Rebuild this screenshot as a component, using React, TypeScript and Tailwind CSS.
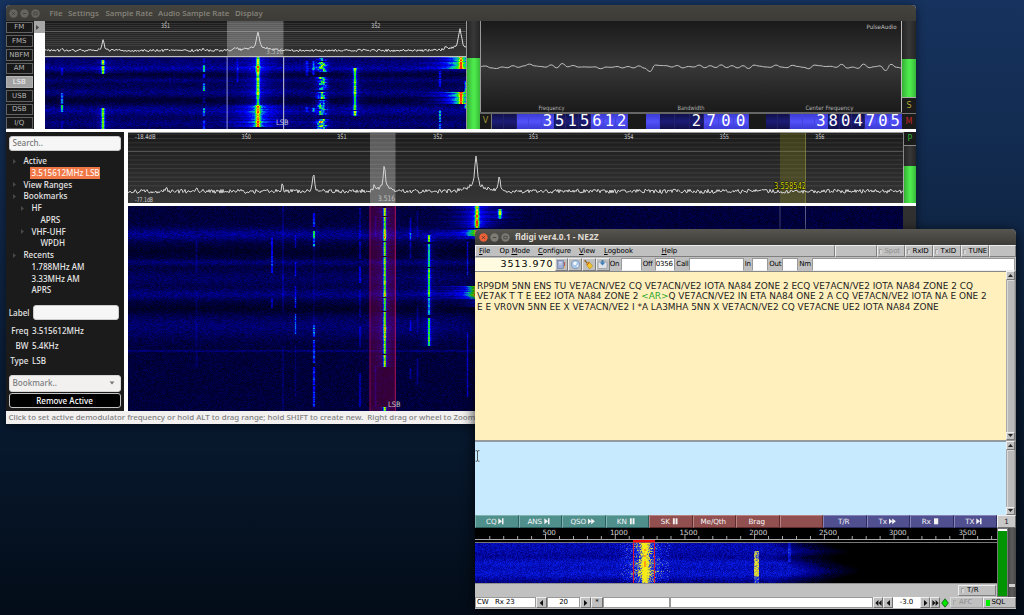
import React from "react";

/* ---------- helpers ---------- */

function hash(x: number, y: number, s = 0): number {
  let h = (x * 374761393 + y * 668265263 + s * 982451653) | 0;
  h = Math.imul(h ^ (h >>> 13), 1274126177);
  h ^= h >>> 16;
  return (h >>> 0) / 4294967296;
}

type Stop = [number, number, number, number];

function palette(stops: Stop[], n: number): string[] {
  const out: string[] = [];
  for (let i = 0; i < n; i++) {
    const t = i / (n - 1);
    let k = 0;
    while (k < stops.length - 2 && t > stops[k + 1][0]) k++;
    const a = stops[k];
    const b = stops[k + 1];
    const f = Math.min(1, Math.max(0, (t - a[0]) / (b[0] - a[0])));
    const c = [1, 2, 3].map((j) => Math.round(a[j] + (b[j] - a[j]) * f));
    out.push(`rgb(${c.join(",")})`);
  }
  return out;
}

const sdrColors = palette(
  [
    [0, 0, 0, 0],
    [0.32, 0, 0, 255],
    [0.5, 0, 190, 200],
    [0.62, 20, 235, 20],
    [0.82, 235, 245, 0],
    [1, 255, 50, 0],
  ],
  64
);

const digiColors = palette(
  [
    [0, 0, 0, 0],
    [0.15, 0, 0, 62],
    [0.3, 0, 0, 136],
    [0.5, 8, 30, 235],
    [0.62, 80, 100, 180],
    [0.7, 170, 170, 100],
    [0.82, 235, 225, 40],
    [0.94, 250, 240, 20],
    [1, 255, 160, 20],
  ],
  56
);

function rasterize(
  w: number,
  h: number,
  levels: number,
  value: (x: number, y: number) => number
): string[] {
  const parts: string[][] = Array.from({ length: levels }, () => []);
  for (let y = 0; y < h; y++) {
    let start = 0;
    let current = -1;
    for (let x = 0; x <= w; x++) {
      const level =
        x < w
          ? Math.max(0, Math.min(levels - 1, Math.round(value(x, y) * (levels - 1))))
          : -2;
      if (level !== current) {
        if (current > 0) parts[current].push(`M${start} ${y}h${x - start}v1h${start - x}z`);
        start = x;
        current = level;
      }
    }
  }
  return parts.map((p) => p.join(""));
}

interface Signal {
  x: number;
  w: number;
  glow?: number;
  glowAmp?: number;
  jitter?: number;
  segs: [number, number, number][];
}

function signalAt(signals: Signal[], x: number, y: number): number {
  let v = 0;
  for (const s of signals) {
    if (Math.abs(x - s.x) > 70) continue;
    for (const [a, b, amp] of s.segs) {
      if (y < a || y > b) continue;
      const row = s.glow ? 0.78 + 0.28 * hash(Math.round(s.x), y, 5) : 0.5 + 0.5 * hash(Math.round(s.x), y, 5);
      const dx = Math.abs(x - s.x - (s.jitter ? (hash(y, 3, 8) - 0.5) * s.jitter : 0));
      const grain = s.jitter ? 0.1 + 0.9 * hash(x >> 1, y >> 1, 11) : 1;
      v += amp * row * grain * Math.exp(-(dx * dx) / (s.w * s.w));
      if (s.glow) v += amp * row * (s.glowAmp ?? 0.25) * Math.exp(-dx / (s.glow * (0.6 + 0.7 * hash(y, 1, 2))));
    }
  }
  return v;
}

function bump(y: number, c: number, w: number): number {
  return Math.exp(-((y - c) * (y - c)) / (w * w));
}

/* ---------- zoomed waterfall ---------- */

const zoomSignals: Signal[] = [
  { x: 16.5, w: 1.2, segs: [[11, 18, 0.22], [36, 46, 0.5], [48, 54, 0.55], [64, 71, 0.12]] },
  { x: 57.5, w: 1.5, glow: 4, segs: [[3, 7, 0.56], [9, 16, 0.56], [51, 60, 0.52], [61, 71, 0.56]] },
  { x: 158.5, w: 1.2, segs: [[1, 5, 0.2], [8, 14, 0.5], [17, 20, 0.34], [26, 33, 0.55], [40, 45, 0.15], [51, 58, 0.42], [63, 71, 0.28]] },
  { x: 192, w: 1, segs: [[2, 24, 0.18]] },
  { x: 212.5, w: 1.7, glow: 11, glowAmp: 0.32, segs: [[0, 8, 0.54], [9, 16, 0.66], [17, 27, 0.54], [28, 37, 0.54], [38, 47, 0.5]] },
  { x: 212.5, w: 2.2, glow: 13, glowAmp: 0.75, segs: [[48, 69, 0.52]] },
  { x: 261.5, w: 1.4, segs: [[4, 18, 0.22], [50, 54, 0.24]] },
  { x: 268, w: 1.3, segs: [[4, 17, 0.36], [51, 54, 0.4]] },
  { x: 276.5, w: 4, jitter: 3, glow: 5, segs: [[1, 3, 0.4], [5, 14, 0.58], [20, 32, 0.54], [35, 41, 0.62], [43, 57, 0.5], [62, 71, 0.66]] },
  { x: 309.5, w: 1.5, glow: 4, segs: [[11, 24, 0.54], [25, 38, 0.54], [39, 52, 0.5], [54, 58, 0.56]] },
  { x: 394.5, w: 1.1, segs: [[14, 20, 0.36], [22, 29, 0.36], [53, 64, 0.5], [66, 71, 0.42]] },
  { x: 415.5, w: 1.6, glow: 12, glowAmp: 1.6, segs: [[0, 11, 0.38], [35, 46, 0.41]] },
  { x: 420, w: 1.2, segs: [[24, 34, 0.5], [46, 51, 0.45]] },
];

const zoomPaths = rasterize(421, 72, 64, (x, y) => {
  const band =
    0.075 + 0.085 * bump(y, 11, 3) + 0.04 * bump(y, 5, 5) + 0.045 * bump(y, 23, 2) + 0.05 * bump(y, 35, 4) +
    0.08 * bump(y, 53, 5) + 0.045 * bump(y, 66, 4) - 0.04 * bump(y, 43, 4) - 0.03 * bump(y, 17, 2);
  return band * (0.75 + 0.5 * hash(x >> 1, y)) + 0.05 * hash(x, y, 4) + signalAt(zoomSignals, x, y);
});

/* ---------- main waterfall ---------- */

const mainSignals: Signal[] = [
  { x: 68, w: 1, segs: [[34, 66, 0.09], [85, 140, 0.07], [145, 160, 0.08]] },
  { x: 143.5, w: 0.8, segs: [[32, 66, 0.4], [92, 102, 0.26]] },
  { x: 154.5, w: 0.8, segs: [[0, 105, 0.12], [140, 204, 0.09]] },
  { x: 167, w: 0.8, segs: [[29, 41, 0.18], [56, 69, 0.24], [80, 90, 0.24], [91, 101, 0.34], [108, 127, 0.36], [140, 190, 0.07]] },
  { x: 185.5, w: 1, segs: [[7, 20, 0.44], [25, 40, 0.58], [119, 130, 0.5], [134, 156, 0.42], [161, 178, 0.44], [180, 200, 0.44], [40, 118, 0.06]] },
  { x: 231.5, w: 0.9, segs: [[2, 32, 0.16], [35, 52, 0.22], [60, 76, 0.3], [84, 110, 0.14], [120, 140, 0.18], [167, 200, 0.22]] },
  { x: 247, w: 0.9, segs: [[10, 30, 0.12], [160, 200, 0.12]] },
  { x: 256.3, w: 1.4, glow: 5, segs: [[2, 9, 0.62], [11, 24, 0.58], [25, 34, 0.66], [36, 49, 0.6], [51, 60, 0.58], [61, 75, 0.56], [76, 90, 0.6], [92, 104, 0.56], [106, 116, 0.6], [117, 132, 0.62], [133, 147, 0.58], [149, 160, 0.62], [201, 205, 0.62]] },
  { x: 282, w: 1, segs: [[12, 26, 0.18], [27, 34, 0.32], [36, 52, 0.16], [114, 124, 0.2], [162, 172, 0.16]] },
  { x: 289, w: 1, segs: [[5, 30, 0.09], [100, 125, 0.08], [152, 178, 0.14]] },
  { x: 300.5, w: 1.2, glow: 4, segs: [[29, 35, 0.54], [38, 60, 0.46], [62, 72, 0.56], [73, 90, 0.48], [92, 108, 0.4], [112, 129, 0.46], [130, 139, 0.54]] },
  { x: 339, w: 0.8, segs: [[36, 68, 0.26], [126, 190, 0.26]] },
  { x: 348.5, w: 1.8, glow: 13, glowAmp: 0.55, segs: [[0, 4, 0.54], [5, 12, 0.6], [13, 21, 0.66], [24, 32, 0.44], [80, 92, 0.55]] },
  { x: 348, w: 8, glow: 18, glowAmp: 0.4, segs: [[23, 29, 0.26], [80, 90, 0.3], [91, 100, 0.12]] },
  { x: 371.5, w: 1.7, glow: 6, segs: [[3, 8, 0.58], [9, 12, 0.4]] },
];

const mainPaths = rasterize(775, 205, 64, (x, y) => {
  if (x > 350 && y > 30) return 0;
  const band =
    0.05 + 0.1 * bump(y, 28, 6) + 0.065 * bump(y, 56, 3) + 0.045 * bump(y, 72, 8) + 0.08 * bump(y, 88, 5) +
    0.06 * bump(y, 120, 12) + 0.08 * bump(y, 144.5, 1) - 0.03 * bump(y, 103, 5) - 0.02 * bump(y, 45, 5);
  return band * (0.75 + 0.5 * hash(x >> 1, y, 7)) + 0.05 * hash(x, y, 9) + signalAt(mainSignals, x, y);
});

/* ---------- fldigi waterfall ---------- */

const digiPaths = rasterize(522, 40, 56, (x, y) => {
  const reach = 335 + 30 * bump(y, 27, 8) + 20 * bump(y, 8, 4);
  const fade = Math.max(0, Math.min(1, 1 - (x - reach + 45) / 65));
  let v = (0.3 + 0.15 * hash(x, y, 21) + 0.05 * bump(y, 20, 4) + 0.05 * bump(y, 30, 4) - 0.09 * bump(y, 39, 4) - 0.04 * bump(y, 13, 4)) * fade;
  if (fade < 0.5 && fade > 0) v *= 0.4 + 0.9 * hash(x, y, 33);
  const d = Math.abs(x - 169.5);
  v += 0.3 * Math.exp(-(d * d) / 12) + (0.13 + 0.28 * hash(x, y, 2)) * Math.exp(-(d * d) / (90 + 90 * hash(y, 2, 6)));
  if (d < 25 && d > 5 && hash(x, y, 40) > 0.8) v += 0.14;
  v = d < 1.5 && hash(y >> 1, 4, 4) > 0.8 ? v + 0.2 : Math.min(v, 0.93);
  if (Math.abs(x - 281) < 2.2) {
    if (y > 7 && y < 33) v += 0.24 + 0.2 * hash(x, y, 3);
    else if (y >= 33) v += 0.12 + 0.2 * hash(x, y, 3);
  }
  if (Math.abs(x - 314) < 1.2 && y < 19) v += 0.17;
  return v;
});

function Heat({ paths, colors }: { paths: string[]; colors: string[] }) {
  return (
    <g shapeRendering="crispEdges">
      {paths.map((d, i) => (d ? <path key={i} d={d} fill={colors[i]} /> : null))}
    </g>
  );
}

/* ---------- spectrum traces ---------- */

function trace(w: number, base: number, noise: number, peaks: [number, number, number, number][], seed: number) {
  const pts: string[] = [];
  for (let x = 0; x <= w; x += 1) {
    let y = base + (hash(x, 1, seed) - 0.5) * noise;
    for (const [px, h, pw, skirt] of peaks) {
      const d = Math.abs(x - px);
      y -= h * (0.65 * Math.exp(-(d * d) / (pw * pw)) + 0.35 * Math.exp(-d / skirt));
    }
    pts.push(`${x},${y.toFixed(1)}`);
  }
  return pts.join(" ");
}

const zoomTrace = trace(421, 29.5, 2.4, [[17, 2, 1.5, 1], [58, 10, 1.5, 3], [158, 2.5, 1.5, 2], [190, 2, 3, 3], [213, 18, 2, 9], [415, 21, 2, 8], [401, 3, 2, 2]], 3);
const mainTrace = trace(775, 59.3, 4, [[38, 5, 1, 1], [68, 2.5, 2, 2], [154.5, 10, 1, 1], [185.5, 20, 1.2, 1.5], [246, 5, 1, 1], [256.3, 28, 1.3, 5], [348, 37, 1.5, 7], [371.3, 15, 1.2, 2]], 14);

const waveOffsets = [
  0, -0.5, 1.4, 2, 0.5, 1.2, -0.8, 0.8, -0.6, -2.4, -0.6, 0, 0.6, -1.6, 1.4, -3, 0.3, -1, 0.6, 0.4, 0.6, 0.4, 2.2, 0.6, 0.8, 0,
  1.4, 0, 1.4, -0.6, 1.6, 5, -1.4, -1, -0.8, 0.5, -1, 1.4, 0, 0.5, -1.4, 1.2, -0.8, 1, -1.6, 1, -0.8, 1.4, -0.8, 2, -1.4, -0.4,
  0.4, 0.8, -1.4, 0.6, 1.2, -1.2, 0, 0.8, 2.2, -1.4, -0.8, 0, -0.2, 0.8, -2.2, 1.6, 0.6, 1.8, -2.4, 1.2, 0.2, -0.6, 4, -2.2, 0.8, 1.6,
];

function wavePath() {
  const step = 422 / (waveOffsets.length - 1);
  let d = `M0 ${45.5 + waveOffsets[0]}`;
  for (let i = 1; i < waveOffsets.length; i++) {
    const x0 = (i - 1) * step;
    const x1 = i * step;
    const m = (x0 + x1) / 2;
    d += `C${m.toFixed(1)} ${45.5 + waveOffsets[i - 1]} ${m.toFixed(1)} ${45.5 + waveOffsets[i]} ${x1.toFixed(1)} ${45.5 + waveOffsets[i]}`;
  }
  return d;
}

function Label({ x, y, w, children, fill = "#d0d0d0", size = 6.5, shadow = false }: { x: number; y: number; w: number; children: string; fill?: string; size?: number; shadow?: boolean }) {
  return (
    <text
      x={x}
      y={y}
      textLength={w}
      lengthAdjust="spacingAndGlyphs"
      fontFamily="'DejaVu Sans', sans-serif"
      fontSize={size}
      fill={fill}
      stroke={shadow ? "#101010" : "none"}
      strokeWidth={shadow ? 1.2 : 0}
      paintOrder="stroke"
    >
      {children}
    </text>
  );
}

function ZoomView() {
  return (
    <svg width="421" height="108" className="block shrink-0">
      <defs>
        <linearGradient id="specBg" x1="0" y1="0" x2="0" y2="1">
          <stop offset="0" stopColor="#1b1b1b" />
          <stop offset="1" stopColor="#363636" />
        </linearGradient>
      </defs>
      <rect width="421" height="108" fill="#000" />
      <rect width="421" height="35" fill="url(#specBg)" />
      {[2, 4, 6, 8, 12, 14, 16, 18, 20, 22, 24].map((y) => (
        <rect key={y} y={y} width="421" height="1" fill="#fff" opacity="0.09" />
      ))}
      <rect y="10" width="421" height="1" fill="#fff" opacity="0.28" />
      <rect x="182" width="56.5" height="35" fill="#fff" opacity="0.28" />
      <polyline points={zoomTrace} fill="none" stroke="#d8d8d8" strokeWidth="1" />
      <rect x="120.5" width="1" height="2" fill="#aaa" />
      <rect x="330.5" width="1" height="2" fill="#aaa" />
      <Label x={116} y={6.8} w={9}>351</Label>
      <Label x={326} y={6.8} w={9.5}>352</Label>
      <Label x={221} y={32.5} w={17.5} size={7.5} fill="#b8b8b8">3.516</Label>
      <g transform="translate(0 36)">
        <Heat paths={zoomPaths} colors={sdrColors} />
        <rect x="181.5" width="1.3" height="72" fill="#8f92d8" opacity="0.75" />
        <rect x="238" width="1.2" height="72" fill="#c8c8dd" opacity="0.85" />
        <Label x={231} y={68} w={12.5} size={7.5} fill="#c8c8d8">LSB</Label>
      </g>
      <rect y="35" width="421" height="1.2" fill="#c0c0c0" />
    </svg>
  );
}

function MainSpectrum() {
  const marks: [number, string][] = [[118, "350"], [213.6, "351"], [309.5, "352"], [405, "353"], [500.5, "354"], [596, "355"], [691.5, "356"]];
  return (
    <svg width="775" height="71" className="block">
      <rect width="775" height="71" fill="url(#specBg)" />
      {[1.7, 6, 10.3, 14.6, 23.2, 27.5, 31.8, 36.1, 40.4, 44.7, 49, 53.3].map((y) => (
        <rect key={y} y={y} width="775" height="1" fill="#fff" opacity="0.09" />
      ))}
      <rect y="18.8" width="775" height="1.2" fill="#fff" opacity="0.22" />
      <rect x="242" width="25.5" height="71" fill="#fff" opacity="0.28" />
      <rect x="652" width="25.5" height="71" fill="#8f8f20" opacity="0.3" />
      <rect x="677" width="1" height="71" fill="#8f8f40" opacity="0.7" />
      <polyline points={mainTrace} fill="none" stroke="#d4d4d4" strokeWidth="1" />
      {marks.map(([x, t]) => (
        <g key={t}>
          <rect x={x} width="1" height="2" fill="#aaa" />
          <Label x={x - 4.5} y={7.2} w={9.5}>{t}</Label>
        </g>
      ))}
      <Label x={7} y={7} w={20.5}>-18.4dB</Label>
      <Label x={7} y={69.5} w={18}>-77.1dB</Label>
      <Label x={250} y={68.5} w={17} size={7.5} fill="#c4c4c4">3.516</Label>
      <Label x={646} y={57} w={32} size={8} fill="#d8d800" shadow>3.558542</Label>
      <rect width="775" height="1" fill="#9a9a9a" />
    </svg>
  );
}

function MainWaterfall() {
  return (
    <svg width="775" height="205" className="block bg-black">
      <Heat paths={mainPaths} colors={sdrColors} />
      <rect x="241.5" width="13" height="205" fill="#b0003c" opacity="0.3" />
      <rect x="258" width="9.5" height="205" fill="#b0003c" opacity="0.3" />
      <rect x="254.5" width="3.5" height="161" fill="#b0003c" opacity="0.1" />
      <rect x="254.5" y="161" width="3.5" height="40" fill="#b0003c" opacity="0.3" />
      <rect x="241.5" width="1" height="205" fill="#b01060" opacity="0.6" />
      <rect x="266.8" width="1" height="205" fill="#d01860" opacity="0.8" />
      <rect x="651.5" width="1" height="30" fill="#8080a0" opacity="0.5" />
      <rect x="677" width="1" height="30" fill="#8080a0" opacity="0.7" />
      <Label x={260} y={201} w={12.5} size={7.5} fill="#c8c8c8">LSB</Label>
    </svg>
  );
}

function Scope() {
  return (
    <svg width="422" height="91" className="block">
      <defs>
        <linearGradient id="scopeBg" x1="0" y1="0" x2="0" y2="1">
          <stop offset="0" stopColor="#1a1a1a" />
          <stop offset="0.5" stopColor="#373737" />
          <stop offset="1" stopColor="#1a1a1a" />
        </linearGradient>
      </defs>
      <rect width="422" height="91" fill="url(#scopeBg)" />
      <path d={wavePath()} fill="none" stroke="#c4c4c4" strokeWidth="1" />
      <rect width="1" height="91" fill="#999" />
      <rect x="421" width="1" height="91" fill="#bbb" />
      <Label x={386.5} y={7.5} w={30} size={6} fill="#c0c0c0">PulseAudio</Label>
      <Label x={58.5} y={88.5} w={26} size={6} fill="#b0b0b0">Frequency</Label>
      <Label x={197.5} y={88.5} w={27} size={6} fill="#b0b0b0">Bandwidth</Label>
      <Label x={325.5} y={88.5} w={48} size={6} fill="#b0b0b0">Center Frequency</Label>
    </svg>
  );
}

function Digits({ width, digits, lead, group }: { width: number; digits: string; lead: number; group: number }) {
  const cells = digits.split("");
  return (
    <div className="flex h-full shrink-0" style={{ width }}>
      {cells.map((c, i) => {
        const bright = lead === 1 ? i < 1 || i > group : Math.floor((i + 1) / 3) % 2 === 1;
        return (
          <div
            key={i}
            className={
              "flex min-w-0 flex-1 items-center justify-center border-r font-['DejaVu_Sans_Mono',monospace] text-[15.5px] leading-none text-white " +
              (bright
                ? "border-[#4343dc] bg-[linear-gradient(#3a3ad4,#5252fa,#3a3ad4)]"
                : "border-[#22226a] bg-[linear-gradient(#101048,#1c1c78,#101048)]")
            }
          >
            {c.trim()}
          </div>
        );
      })}
    </div>
  );
}

function WindowButton({ color, glyph }: { color: string; glyph: "x" | "min" | "max" }) {
  return (
    <svg width="9" height="9" viewBox="0 0 9 9" className="shrink-0">
      <circle cx="4.5" cy="4.5" r="4.2" fill={color} />
      {glyph === "x" && <path d="M3.2 3.2l2.6 2.6M5.8 3.2l-2.6 2.6" stroke="#3f3a35" strokeWidth="0.8" />}
      {glyph === "min" && <path d="M2.8 4.5h3.4" stroke="#3f3a35" strokeWidth="0.8" />}
      {glyph === "max" && <rect x="2.9" y="3.1" width="3.2" height="2.8" fill="none" stroke="#3f3a35" strokeWidth="0.7" />}
    </svg>
  );
}

const modes = ["FM", "FMS", "NBFM", "AM", "LSB", "USB", "DSB", "I/Q"];

function Meter({ className }: { className: string }) {
  return <div className={"bg-[linear-gradient(90deg,#36b035,#4ce84c_45%,#4ce84c_60%,#38b838)] " + className} />;
}

const METER_BG = "bg-[linear-gradient(90deg,#252525,#383838,#252525)]";

function TreeRow({ label, indent, arrow, selected }: { label: string; indent: string; arrow?: boolean; selected?: boolean }) {
  return (
    <div className={"flex h-[11.73px] items-center whitespace-nowrap " + indent}>
      <span className="flex w-[11px] shrink-0 items-center">
        {arrow && (
          <svg width="3" height="5" viewBox="0 0 3 5">
            <path d="M0 0l3 2.5L0 5z" fill="#484848" />
          </svg>
        )}
      </span>
      <span className={selected ? "-ml-0.5 flex h-3 w-[70.5px] items-center bg-[#f07746] pl-0.5 text-[#fff4ee]" : ""}>{label}</span>
    </div>
  );
}

function Field({ label, value }: { label: string; value: string }) {
  return (
    <div className="flex h-[15px] items-center gap-[3.5px]">
      <span className="w-[23px] text-right">{label}</span>
      <span>{value}</span>
    </div>
  );
}

function Sidebar() {
  return (
    <div className="flex h-full w-[118px] shrink-0 flex-col bg-[#1b1b1b] px-[3px] pt-1 font-['Noto_Sans','Open_Sans',sans-serif] text-[8.1px] font-medium leading-none text-[#e6e6e6]">
      <div className="flex h-[15px] shrink-0 items-center rounded-[3px] border border-[#c8c8c8] bg-[#f6f6f6] px-[3px] text-[#777]">Search..</div>
      <div className="mt-[4.5px] flex flex-col">
        <TreeRow label="Active" indent="pl-1" arrow />
        <TreeRow label="3.515612MHz LSB" indent="pl-3" selected />
        <TreeRow label="View Ranges" indent="pl-1" arrow />
        <TreeRow label="Bookmarks" indent="pl-1" arrow />
        <TreeRow label="HF" indent="pl-3" arrow />
        <TreeRow label="APRS" indent="pl-[21px]" />
        <TreeRow label="VHF-UHF" indent="pl-3" arrow />
        <TreeRow label="WPDH" indent="pl-[21px]" />
        <TreeRow label="Recents" indent="pl-1" arrow />
        <TreeRow label="1.788MHz AM" indent="pl-3" />
        <TreeRow label="3.33MHz AM" indent="pl-3" />
        <TreeRow label="APRS" indent="pl-3" />
      </div>
      <div className="mt-[9px] flex h-[15px] items-center gap-[3px]">
        <span className="w-[21px] text-right">Label</span>
        <div className="h-[15px] w-[86px] rounded-[3px] border border-[#ccc] bg-[#f6f6f6]" />
      </div>
      <div className="mt-[3.5px] flex flex-col -ml-[3px]">
        <Field label="Freq" value="3.515612MHz" />
        <Field label="BW" value="5.4KHz" />
        <Field label="Type" value="LSB" />
      </div>
      <div className="mt-[6px] flex h-[17px] shrink-0 items-center justify-between rounded-[3px] border border-[#d8d6d4] bg-[#f2f1f0] pl-[3px] pr-[5px] text-[#7c7c7c]">
        <span>Bookmark..</span>
        <svg width="6" height="4" viewBox="0 0 6 4"><path d="M0.5 0.5h5L3 3.5z" fill="#777" /></svg>
      </div>
      <div className="mt-[1.5px] flex h-[15px] shrink-0 items-center justify-center rounded-[3px] border border-[#c4c4c4] bg-black pt-px text-white">Remove Active</div>
    </div>
  );
}

function SdrWindow() {
  return (
    <div className="absolute left-[5.5px] top-[5px] flex h-[419px] w-[910.5px] flex-col overflow-hidden rounded-t-[4px] bg-[#f2f1f0] shadow-[0_2px_10px_rgba(0,0,0,0.5)]">
      <div className="flex h-4 shrink-0 items-center bg-[linear-gradient(#45433e,#3c3b37)] font-['Noto_Sans','Open_Sans',sans-serif] text-[7.95px] font-medium leading-none text-[#8a877f]">
        <div className="ml-[3.5px] flex w-[40.5px] gap-[2px]">
          <WindowButton color="#66645e" glyph="x" />
          <WindowButton color="#66645e" glyph="min" />
          <WindowButton color="#66645e" glyph="max" />
        </div>
        <span className="w-[18.5px] pt-px">File</span>
        <span className="w-[37.5px] whitespace-nowrap pt-px">Settings</span>
        <span className="w-[52.5px] whitespace-nowrap pt-px">Sample Rate</span>
        <span className="w-[77px] whitespace-nowrap pt-px">Audio Sample Rate</span>
        <span className="pt-px">Display</span>
      </div>
      <div className="flex h-[108px] shrink-0">
        <div className="flex w-[28.5px] shrink-0 flex-col gap-[2px] bg-[#1a1a1a] pr-[1px] pt-[0.5px]">
          {modes.map((m) => (
            <div
              key={m}
              className={
                "flex min-h-0 flex-1 items-center justify-center border pt-px font-['DejaVu_Sans',sans-serif] text-[7px] leading-none " +
                (m === "LSB" ? "border-[#b4b4b4] bg-[#a2a2a2] text-[#f4f4f4]" : "border-[#626262] bg-[#191919] text-[#b4b4b4]")
              }
            >
              {m}
            </div>
          ))}
        </div>
        <div className="flex w-[11px] shrink-0 flex-col bg-white">
          <div className="flex h-[12px] items-center bg-[#a6a6a6] pl-[2px]">
            <svg width="3" height="5" viewBox="0 0 3 5"><path d="M0 0l3 2.5L0 5z" fill="#444" /></svg>
          </div>
        </div>
        <ZoomView />
        <div className={"flex w-[14px] shrink-0 flex-col justify-end border-l border-[#999] " + METER_BG}>
          <Meter className="h-[71px]" />
        </div>
        <div className="flex w-[422px] shrink-0 flex-col">
          <Scope />
          <div className="h-[1.5px] shrink-0 bg-[#666]" />
          <div className="flex min-h-0 flex-1 bg-[#1a1a1a]">
            <div className="flex w-[12px] shrink-0 items-center justify-center border-r border-[#777] font-['DejaVu_Sans',sans-serif] text-[8px] leading-none text-[#a09c30]">V</div>
            <Digits width={136.5} digits="    3515612" lead={2} group={3} />
            <div className="w-[17px] shrink-0" />
            <Digits width={103} digits="   2700" lead={1} group={3} />
            <div className="w-[17px] shrink-0" />
            <Digits width={136.5} digits="    3804705" lead={2} group={3} />
          </div>
        </div>
        <div className={"flex min-w-0 flex-1 flex-col " + METER_BG}>
          <div className="h-[38px] shrink-0" />
          <Meter className="h-[38px] shrink-0" />
          <div className="flex h-[16px] shrink-0 items-center justify-center border-t border-[#aaa] bg-[#1b1b1b] font-['DejaVu_Sans',sans-serif] text-[8px] leading-none text-[#b0a830]">S</div>
          <div className="flex flex-1 items-center justify-center border-t border-[#777] bg-[#1b1b1b] font-['DejaVu_Sans',sans-serif] text-[8px] leading-none text-[#c02828]">M</div>
        </div>
      </div>
      <div className="h-[3px] shrink-0 bg-white" />
      <div className="flex h-[279px] shrink-0 bg-white">
        <Sidebar />
        <div className="w-[4.5px] shrink-0 bg-white" />
        <div className="flex w-[775px] shrink-0 flex-col">
          <MainSpectrum />
          <div className="h-[3px] shrink-0 bg-white" />
          <MainWaterfall />
        </div>
        <div className="flex min-w-0 flex-1 flex-col">
          <div className="flex h-[14px] shrink-0 items-center justify-center border-b border-l border-[#888] bg-[#1b1b1b] font-['DejaVu_Sans',sans-serif] text-[8px] leading-none text-[#2eb02e]">P</div>
          <div className={"h-5 shrink-0 border-l border-[#888] " + METER_BG} />
          <Meter className="h-[37px] shrink-0 border-l border-[#aaa]" />
          <div className="h-[3px] shrink-0 bg-white" />
          <div className="flex-1 bg-[#303030]" />
        </div>
      </div>
      <div className="flex min-h-0 flex-1 items-center whitespace-nowrap pl-[3px] font-['Noto_Sans','Open_Sans',sans-serif] text-[7.9px] font-medium leading-none text-[#808080]">
        Click to set active demodulator frequency or hold ALT to drag range; hold SHIFT to create new.&nbsp; Right drag or wheel to Zoom
      </div>
    </div>
  );
}

/* ---------- fldigi ---------- */

function MenuItem({ pre = "", u, post, className }: { pre?: string; u: string; post: string; className: string }) {
  return (
    <span className={"shrink-0 whitespace-nowrap " + className}>
      {pre}
      <span className="underline underline-offset-1">{u}</span>
      {post}
    </span>
  );
}

function IdButton({ label, dim, w }: { label: string; dim?: boolean; w: string }) {
  return (
    <div className={"flex shrink-0 items-center gap-[2.5px] border border-b-[#7c7c7c] border-l-[#ececec] border-r-[#7c7c7c] border-t-[#ececec] pl-[1px] " + w}>
      <span className="h-[5px] w-[3px] shrink-0 border-l border-t border-[#a0a0a0] bg-[#d4d4d4]" />
      <span className={dim ? "text-[#8f8f8f]" : "text-black"}>{label}</span>
    </div>
  );
}

function ToolIcon({ children }: { children: React.ReactNode }) {
  return (
    <div className="flex w-[13.8px] shrink-0 items-center justify-center border border-b-[#7c7c7c] border-l-[#ececec] border-r-[#7c7c7c] border-t-[#ececec]">
      <svg width="11" height="11" viewBox="0 0 11 11">{children}</svg>
    </div>
  );
}

type Glyph = "next" | "ff" | "pause" | "stop" | "";

function MacroGlyph({ g }: { g: Glyph }) {
  if (!g) return null;
  return (
    <svg width="7" height="7" viewBox="0 0 7 6.4" className="shrink-0" fill="#f2f2f2">
      {g === "next" && <path d="M0.3 0L4 3L0.3 6zM4 0h1.5v6H4z" />}
      {g === "ff" && <path d="M0 0.1L3.4 3L0 5.9zM3.2 0.1L6.9 3L3.2 5.9z" />}
      {g === "pause" && <path d="M0.9 0h1.9v6H0.9zM3.6 0h1.9v6H3.6z" />}
      {g === "stop" && <path d="M1 0h4.2v6H1z" />}
    </svg>
  );
}

const macros: [string, Glyph, "t" | "r" | "b"][] = [
  ["CQ", "next", "t"], ["ANS", "next", "t"], ["QSO", "ff", "t"], ["KN", "pause", "t"],
  ["SK", "pause", "r"], ["Me/Qth", "", "r"], ["Brag", "", "r"], ["", "", "r"],
  ["T/R", "", "b"], ["Tx", "ff", "b"], ["Rx", "stop", "b"], ["TX", "next", "b"],
];

const macroTone = {
  t: "bg-[#4f908d] border-t-[#80b4b2] border-l-[#80b4b2] border-b-[#2c5f5d] border-r-[#2c5f5d]",
  r: "bg-[#914f50] border-t-[#b88283] border-l-[#b88283] border-b-[#602c2d] border-r-[#602c2d]",
  b: "bg-[#505090] border-t-[#8484b8] border-l-[#8484b8] border-b-[#2c2c60] border-r-[#2c2c60]",
};

const RAISED = "border border-b-[#777] border-l-[#eee] border-r-[#777] border-t-[#eee] bg-[#c0c0c0]";

function ScrollBar() {
  return (
    <div className="flex w-[9px] shrink-0 flex-col justify-between bg-[#a8a8a8]">
      <div className={"flex h-[8.5px] items-center justify-center " + RAISED}>
        <svg width="5" height="3" viewBox="0 0 5 3"><path d="M0 3h5L2.5 0z" fill="#222" /></svg>
      </div>
      <div className="mx-px flex-1 border-l border-t border-[#d8d8d8] bg-[#bababa]" />
      <div className={"flex h-[8.5px] items-center justify-center " + RAISED}>
        <svg width="5" height="3" viewBox="0 0 5 3"><path d="M0 0h5L2.5 3z" fill="#222" /></svg>
      </div>
    </div>
  );
}

function DigiWaterfall() {
  const ticks: number[] = [];
  for (let i = 1; i <= 37; i++) ticks.push(i);
  const labels: [number, string][] = [[500, "500"], [1000, "1000"], [1500, "1500"], [2000, "2000"], [2500, "2500"], [3000, "3000"], [3500, "3500"]];
  return (
    <svg width="522" height="55" className="block shrink-0">
      <rect width="522" height="55" fill="#000" />
      {ticks.map((i) => (
        <rect key={i} x={0.4 + i * 13.94} y={i % 5 === 0 ? 6 : 8} width="0.9" height={i % 5 === 0 ? 5.5 : 3.5} fill="#bbb" />
      ))}
      <rect y="11" width="522" height="1" fill="#aaa" />
      <g fontFamily="'DejaVu Sans', sans-serif" fontSize="7.2" fill="#d0d0d0">
        {labels.map(([f, t]) => (
          <text key={t} x={4.5 + f * 0.1394} y="6.6" textAnchor="middle" textLength={t.length * 4.5}>{t}</text>
        ))}
      </g>
      <rect y="14" width="522" height="1" fill="#777" />
      <rect x="158" y="12" width="22" height="2.4" fill="#f00808" />
      <g transform="translate(0 15)">
        <Heat paths={digiPaths} colors={digiColors} />
        <rect x="158" width="1" height="40" fill="#e01030" />
        <rect x="179" width="1" height="40" fill="#e01030" />
      </g>
    </svg>
  );
}

function StepButton({ d, w = "w-[10px]" }: { d: string; w?: string }) {
  return (
    <div className={"flex shrink-0 items-center justify-center border border-b-[#707070] border-l-[#eee] border-r-[#707070] border-t-[#eee] bg-[#c0c0c0] " + w}>
      <svg width="7" height="6" viewBox="0 0 7 6"><path d={d} fill="#111" /></svg>
    </div>
  );
}

const rxLine = "w-[530px] shrink-0 whitespace-nowrap text-left";

function FldigiWindow() {
  return (
    <div className="absolute left-[475px] top-[229px] flex h-[380px] w-[541px] flex-col overflow-hidden rounded-t-[5px] bg-[#c0c0c0] font-['DejaVu_Sans',sans-serif] leading-none text-black shadow-[0_3px_14px_rgba(0,0,0,0.85)]">
      <div className="flex h-4 shrink-0 items-center gap-[2px] bg-[linear-gradient(#57554f,#3d3c38)] pl-[3.5px]">
        <WindowButton color="#ec6037" glyph="x" />
        <WindowButton color="#7d7b74" glyph="min" />
        <WindowButton color="#7d7b74" glyph="max" />
        <span className="ml-[3.5px] whitespace-nowrap font-['Noto_Sans','Open_Sans',sans-serif] text-[8.3px] font-bold text-[#e0ddd5]">fldigi ver4.0.1 - NE2Z</span>
      </div>
      <div className="flex h-[12px] shrink-0 text-[7px] tracking-[-0.1px]">
        <div className="flex w-[360px] shrink-0 items-center border border-b-[#808080] border-l-[#eee] border-r-[#808080] border-t-[#eee] pl-[3px]">
          <MenuItem u="F" post="ile" className="w-[20.5px]" />
          <MenuItem pre="Op " u="M" post="ode" className="w-[38.5px]" />
          <MenuItem u="C" post="onfigure" className="w-[41px]" />
          <MenuItem u="V" post="iew" className="w-[25px]" />
          <MenuItem u="L" post="ogbook" className="w-[57.5px]" />
          <MenuItem u="H" post="elp" className="" />
        </div>
        <div className="w-[42px] shrink-0 border border-b-[#808080] border-l-[#eee] border-r-[#808080] border-t-[#eee]" />
        <IdButton label="Spot" dim w="w-[28px]" />
        <IdButton label="RxID" w="w-[28px]" />
        <IdButton label="TxID" w="w-[28px]" />
        <IdButton label="TUNE" w="w-[28px]" />
        <div className="min-w-0 flex-1 border border-b-[#808080] border-l-[#eee] border-r-[#808080] border-t-[#eee]" />
      </div>
      <div className="flex h-[14px] shrink-0 items-stretch py-[0.5px] pr-px text-[7px] tracking-[-0.2px]">
        <div className="flex w-[79.5px] shrink-0 items-center justify-end bg-[#fffbe0] pr-[1px] font-['DejaVu_Sans',sans-serif] text-[9.5px] tracking-[0.95px]">3513.970</div>
        <ToolIcon>
          <rect x="1.5" y="1.5" width="6" height="8" fill="#9fb0d4" stroke="#66749a" strokeWidth="0.6" />
          <path d="M3 3.5h3M3 5h3" stroke="#eef" strokeWidth="0.7" />
          <path d="M8.6 3v4" stroke="#b85a5a" strokeWidth="1.1" />
          <path d="M8.6 7v2" stroke="#e8b860" strokeWidth="1.1" />
        </ToolIcon>
        <ToolIcon>
          <circle cx="5.5" cy="5.5" r="4.1" fill="#aac6e6" stroke="#6f8db0" strokeWidth="0.7" />
          <path d="M3 4l2-1.6 2 1.4-1 2-2 .4zM6.5 7l1.6-1.4.4 1.6-1.2 1z" fill="#f4f8ff" />
        </ToolIcon>
        <ToolIcon>
          <path d="M1.6 1.2l3.2 3.4" stroke="#8f5a20" strokeWidth="1.3" />
          <path d="M4 4l2.2-.8L9.8 7 6.6 10 3.6 6.2z" fill="#f2c628" stroke="#a87c10" strokeWidth="0.5" />
          <path d="M3.8 6l2.8-2.6" stroke="#c03020" strokeWidth="0.8" />
        </ToolIcon>
        <ToolIcon>
          <rect x="1" y="3" width="9" height="6.6" rx="0.8" fill="#dfe3e8" stroke="#7a8490" strokeWidth="0.6" />
          <path d="M4.5 1h2v2.5H8.3L5.5 6.4 2.7 3.5h1.8z" fill="#3f7fb8" />
        </ToolIcon>
        <span className="flex w-[11px] shrink-0 items-center">On</span>
        <div className="w-[21px] shrink-0 border border-[#999] border-b-[#eee] bg-white" />
        <span className="flex w-[13px] shrink-0 items-center pl-[1px]">Off</span>
        <div className="flex w-[20.5px] shrink-0 items-center border border-[#999] border-b-[#eee] bg-white">0356</div>
        <span className="flex w-[13.5px] shrink-0 items-center pl-px">Call</span>
        <div className="w-[55px] shrink-0 border border-[#999] border-b-[#eee] bg-white" />
        <span className="flex w-[8.5px] shrink-0 items-center pl-px">In</span>
        <div className="w-[16px] shrink-0 border border-[#999] border-b-[#eee] bg-white" />
        <span className="flex w-[14px] shrink-0 items-center pl-px">Out</span>
        <div className="w-[16px] shrink-0 border border-[#999] border-b-[#eee] bg-white" />
        <span className="flex w-[14px] shrink-0 items-center pl-px">Nm</span>
        <div className="min-w-0 flex-1 border border-[#999] border-b-[#eee] bg-white" />
      </div>
      <div className="flex h-[169px] shrink-0">
        <div className="flex min-w-0 flex-1 flex-col border-t border-[#888] bg-[#fff0be] pl-[2px] pt-[8.5px] text-[8.94px] leading-[10.7px] text-[#1c1c1c]">
          <div className={rxLine}>RP9DM 5NN ENS TU VE7ACN/VE2 CQ VE7ACN/VE2 IOTA NA84 ZONE 2 ECQ VE7ACN/VE2 IOTA NA84 ZONE 2 CQ</div>
          <div className={rxLine}>
            VE7AK T T E EE2 IOTA NA84 ZONE 2 <span className="text-[#1fa81f]">&lt;AR&gt;</span>Q VE7ACN/VE2 IN ETA NA84 ONE 2 A CQ VE7ACN/VE2 IOTA NA E ONE 2
          </div>
          <div className={rxLine}>E E VR0VN 5NN EE X VE7ACN/VE2 I *A LA3MHA 5NN X VE7ACN/VE2 CQ VE7ACNE UE2 IOTA NA84 ZONE</div>
        </div>
        <ScrollBar />
        <div className="w-px shrink-0 bg-[#888]" />
      </div>
      <div className="h-px shrink-0 bg-[#999]" />
      <div className="flex h-[74px] shrink-0">
        <div className="flex min-w-0 flex-1 border-t border-[#8f9ba5] bg-[#c8eaff] pt-[8px]">
          <svg width="5" height="12" viewBox="0 0 5 12">
            <path d="M0.5 0.7h1.2q.6 0 .8.6.2-.6.8-.6h1.2M2.5 1v9.6M0.5 11.2h1.2q.6 0 .8-.6.2.6.8.6h1.2" fill="none" stroke="#333" strokeWidth="0.8" />
          </svg>
        </div>
        <ScrollBar />
        <div className="w-px shrink-0 bg-[#888]" />
      </div>
      <div className="flex h-[13px] shrink-0 text-[7.2px] text-[#f4f4f4]">
        <div className="flex w-[522px] shrink-0">
          {macros.map(([label, glyph, tone], i) => (
            <div key={i} className={"flex min-w-0 flex-1 items-center justify-center gap-[2px] border pr-[2px] tracking-[-0.1px] " + macroTone[tone]}>
              {label}
              <MacroGlyph g={glyph} />
            </div>
          ))}
        </div>
        <div className="flex min-w-0 flex-1 items-center justify-center border border-b-[#707070] border-l-[#eee] border-r-[#707070] border-t-[#eee] bg-[#c8c8c8] text-[#222]">1</div>
      </div>
      <div className="flex h-[69px] shrink-0">
        <div className="flex w-[522px] shrink-0 flex-col">
          <DigiWaterfall />
          <div className="flex flex-1 items-center justify-end border-t border-[#909090] bg-[#c0c0c0] pr-px text-[7px]">
            <div className="flex h-[11px] w-[38px] items-center gap-[3px] border border-b-[#808080] border-l-[#eee] border-r-[#808080] border-t-[#eee] pl-[2px]">
              <span className="h-[5px] w-[3px] border-l border-t border-[#a0a0a0] bg-[#d8d8d8]" />T/R
            </div>
          </div>
        </div>
        <div className="flex w-[10.5px] shrink-0 flex-col border border-[#777] bg-[#009400]">
          <div className="h-[1.5px] bg-white" />
        </div>
        <div className="flex min-w-0 flex-1 flex-col justify-end bg-[linear-gradient(90deg,#454545,#5c5c5c,#454545)] pb-[10px]">
          <div className="mx-px h-[3px] bg-[#d0d0d0]" />
        </div>
      </div>
      <div className="flex h-[11px] shrink-0 text-[7px] tracking-[-0.1px]">
        <div className="flex w-[61px] shrink-0 items-center border border-[#999] bg-white pl-[1px]">
          <span className="w-[18px]">CW</span>
          <span>Rx 23</span>
        </div>
        <StepButton d="M5 0v6L1.6 3z" w="w-[11px]" />
        <div className="flex w-[33px] shrink-0 items-center justify-center border border-[#999] bg-white">20</div>
        <StepButton d="M2 0v6L5.4 3z" w="w-[11px]" />
        <div className="flex w-[12px] shrink-0 items-center justify-center border border-b-[#707070] border-l-[#eee] border-r-[#707070] border-t-[#eee]">*</div>
        <div className="w-[67px] shrink-0 border border-[#999] bg-white" />
        <div className="w-[203px] shrink-0 border border-[#999] bg-white" />
        <StepButton d="M3.4 0v6L0.4 3zM6.6 0v6L3.6 3z" />
        <StepButton d="M5 0v6L1.6 3z" />
        <div className="flex w-[27px] shrink-0 items-center justify-center bg-white">-3.0</div>
        <StepButton d="M2 0v6L5.4 3z" />
        <StepButton d="M0.4 0v6l3-3zM3.6 0v6l3-3z" />
        <div className="flex w-[10px] shrink-0 items-center justify-center">
          <svg width="8" height="10" viewBox="0 0 8 10"><path d="M4 0.8L7.3 5L4 9.2L0.7 5z" fill="#00e800" stroke="#145014" strokeWidth="0.8" /></svg>
        </div>
        <div className="flex w-[33px] shrink-0 items-center gap-[3px] border border-b-[#a0a0a0] border-l-[#ddd] border-r-[#a0a0a0] border-t-[#ddd] pl-[2px] text-[#8f8f8f]">
          <span className="h-[5px] w-[3px] border-l border-t border-[#aaa]" />AFC
        </div>
        <div className="flex min-w-0 flex-1 items-center gap-[2px] border border-b-[#808080] border-l-[#eee] border-r-[#808080] border-t-[#eee] pl-[2px]">
          <span className="h-[6px] w-[3.5px] bg-[#00f000]" />SQL
        </div>
      </div>
    </div>
  );
}

export default function App() {
  return (
    <div className="relative h-[615px] w-[1024px] overflow-hidden bg-[linear-gradient(#16325e_0%,#132c52_20%,#0f2544_40%,#081a30_68%,#030c18_100%)]">
      <SdrWindow />
      <FldigiWindow />
    </div>
  );
}
